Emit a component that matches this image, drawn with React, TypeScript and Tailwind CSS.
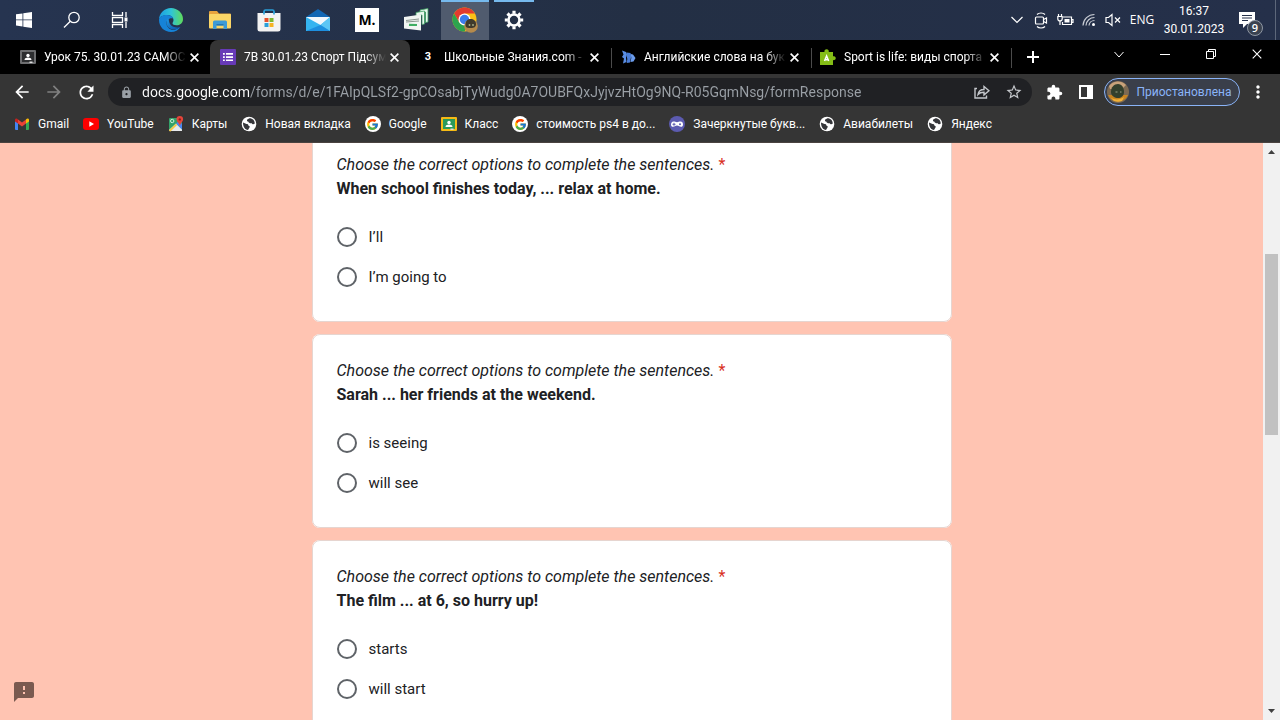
import type { ReactNode } from 'react'
import { FcGoogle } from 'react-icons/fc'
import {
  MdArrowBack,
  MdArrowForward,
  MdExtension,
  MdFeedback,
  MdLock,
  MdMoreVert,
  MdRefresh,
  MdStarBorder,
} from 'react-icons/md'

const QUESTION_TITLE = 'Choose the correct options to complete the sentences.'

const questions = [
  { id: 'q1', text: 'When school finishes today, ... relax at home.', options: ['I’ll', 'I’m going to'] },
  { id: 'q2', text: 'Sarah ... her friends at the weekend.', options: ['is seeing', 'will see'] },
  { id: 'q3', text: 'The film ... at 6, so hurry up!', options: ['starts', 'will start'] },
]

/* ---------- taskbar icons ---------- */

const StartIcon = () => (
  <svg width="16" height="16" viewBox="0 0 16 16" fill="#fff">
    <path d="M0 2.3 6.5 1.400V7.500H0zM7.300 1.300 16 0V7.500H7.300zM0 8.300H6.500V14.500L0 13.600zM7.300 8.300H16V16L7.300 14.700z" />
  </svg>
)

const SearchIcon = () => (
  <svg width="18" height="18" viewBox="0 0 18 18" fill="none" stroke="#fff" strokeWidth="1.3">
    <circle cx="11" cy="6.500" r="5.200" />
    <path d="M7.300 10.200 1 16.500" />
  </svg>
)

const TaskViewIcon = () => (
  <svg width="18" height="18" viewBox="0 0 18 18" fill="none" stroke="#fff" strokeWidth="1.300">
    <path d="M1.500 1v3.500h10V1M1.500 17v-3.500h10V17M1.500 6.700h10v4.600h-10zM15 1v5M15 11v6" />
    <path d="M15 6.500v4" strokeWidth="3" />
  </svg>
)

const EdgeIcon = () => (
  <svg width="26" height="26" viewBox="0 0 26 26">
    <defs>
      <linearGradient id="edgeTop" x1="0" y1="0.500" x2="1" y2="0.500">
        <stop offset="0" stopColor="#1b9de2" />
        <stop offset="0.500" stopColor="#2fc4d8" />
        <stop offset="1" stopColor="#5fdc5a" />
      </linearGradient>
      <linearGradient id="edgeLow" x1="0" y1="0" x2="1" y2="1">
        <stop offset="0" stopColor="#1f9ae6" />
        <stop offset="1" stopColor="#0c4fa3" />
      </linearGradient>
    </defs>
    <path d="M1 13C1 6 6.500 1 13 1s12 5 12 11c0 4-3 6.300-6.500 6.300-2.500 0-4-1-4-2 0-.8 1-1.300 1-3.300C15.500 10 12.500 8 9 8c-4.500 0-8 2.500-8 5z" fill="url(#edgeTop)" />
    <path d="M1 13c0-3 3.500-5 8-5 3.500 0 5.500 1.500 6.300 3.400C11 10.500 8.500 13 8.500 16c0 4.500 4 8 9 6.500l5-2.500C20.500 23 17 25 13 25 6.500 25 1 20 1 13z" fill="#1683d8" />
    <path d="M10.200 11.200C9 12.500 8.500 14 8.500 16c0 4.300 4.500 7 9 6.300 2-.3 3.800-1.300 5-2.500-2 1.200-8 1.200-10.500-2.800-1.500-2.500-.8-4.800-1.800-5.800z" fill="url(#edgeLow)" />
  </svg>
)

const ExplorerIcon = () => (
  <svg width="22" height="20" viewBox="0 0 22 20">
    <path d="M0 2a1 1 0 0 1 1-1h7l2 2.500h11a1 1 0 0 1 1 1V10H0z" fill="#e8a33d" />
    <rect y="4" width="22" height="14.500" rx="1" fill="#fbd667" />
    <path d="M4 19v-7a1.500 1.500 0 0 1 1.500-1.500h11A1.500 1.500 0 0 1 18 12v7h-3.500v-3.500h-7V19z" fill="#3d9bd6" />
    <path d="M7.500 14h7v1.500h-7z" fill="#2477b3" />
  </svg>
)

const StoreIcon = () => (
  <svg width="24" height="24" viewBox="0 0 24 24">
    <path d="M7 7V3.500A1.500 1.500 0 0 1 8.500 2h7A1.500 1.500 0 0 1 17 3.500V7" fill="none" stroke="#2a9fd8" strokeWidth="1.600" />
    <path d="M.5 5h23v16a2.500 2.500 0 0 1-2.500 2.500H3A2.500 2.500 0 0 1 .5 21z" fill="#f3f3f3" />
    <path d="M7 3.500V6.500M17 3.500V6.500" stroke="#2a9fd8" strokeWidth="1.600" />
    <path d="M7.500 10h4v4h-4z" fill="#e5502a" />
    <path d="M12.500 10h4v4h-4z" fill="#7cb82f" />
    <path d="M7.500 15h4v4h-4z" fill="#2a9fd8" />
    <path d="M12.500 15h4v4h-4z" fill="#f5b322" />
  </svg>
)

const MailIcon = () => (
  <svg width="24" height="23" viewBox="0 0 24 23">
    <path d="M0 8 12 0l12 8v6H0z" fill="#1267b4" />
    <path d="M0 8h24v14H0z" fill="#35b4f0" />
    <path d="M0 8h24L14.500 16z" fill="#f2f8fd" />
    <path d="M24 8v14l-9.500-6z" fill="#5cc6f5" />
    <path d="M0 22 14.500 16 24 22z" fill="#1d8fdf" />
  </svg>
)

const SpaceDeskIcon = () => (
  <svg width="26" height="24" viewBox="0 0 26 24">
    <path d="M17 2 25 .5V14l-2.500.5V4L17 5z" fill="#e9f7ee" stroke="#3f9f62" strokeWidth=".8" />
    <path d="M13 4.500 21.500 3v13l-2.500.5V7l-6 1z" fill="#e9f7ee" stroke="#3f9f62" strokeWidth=".8" />
    <path d="M1 9 18 6.500v16L1 20.500z" fill="#f1f5f2" />
    <path d="M3 12.500 16 11M3 14l13-1" stroke="#8a968e" strokeWidth="1" />
    <path d="M6 16.800l8 .200" stroke="#3fae62" strokeWidth="2.200" />
  </svg>
)

const ChromeIcon = () => (
  <svg width="26" height="26" viewBox="0 0 26 26">
    <circle cx="12.500" cy="12.500" r="12" fill="#fbc116" />
    <path d="M2.100 6.500A12 12 0 0 1 22.900 6.500H12.500L7.300 15.500z" fill="#e33b2e" />
    <path d="M2.100 6.500A12 12 0 0 0 12.500 24.500L17.700 15.500H7.300z" fill="#2da44e" />
    <circle cx="12.500" cy="12.500" r="6" fill="#fff" />
    <circle cx="12.500" cy="12.500" r="4.700" fill="#3b7ded" />
    <circle cx="19" cy="19" r="6.800" fill="#b58a4c" />
    <path d="M13.500 18c0-4 2-6 5-6s5.500 2 5.500 5-2 4-5 4-5.500 0-5.500-3z" fill="#3f3a2c" />
    <circle cx="17.500" cy="18" r="0.900" fill="#a9b08a" />
    <circle cx="21" cy="18" r="0.900" fill="#a9b08a" />
  </svg>
)

const GearIcon = () => (
  <svg width="20" height="20" viewBox="0 0 20 20" fill="none" stroke="#fff">
    <circle cx="10" cy="10" r="5.500" strokeWidth="2.600" />
    {[0, 45, 90, 135].map((a) => (
      <path key={a} d="M10 .800v3M10 16.200v3" strokeWidth="3.200" transform={`rotate(${a} 10 10)`} />
    ))}
  </svg>
)

/* ---------- tray icons ---------- */

const ChevronIcon = () => (
  <svg width="14" height="8" viewBox="0 0 14 8" fill="none" stroke="#fff" strokeWidth="1.200">
    <path d="M1.500 1 7 6.500 12.500 1" />
  </svg>
)

const MeetNowIcon = () => (
  <svg width="14" height="17" viewBox="0 0 14 17" fill="none" stroke="#fff" strokeWidth="1.200">
    <path d="M3 2.500C5 .5 9 .5 11 2.500M3 14.500c2 2 6 2 8 0" />
    <rect x="1.500" y="5" width="8" height="7" rx="1" />
    <path d="M9.500 7.500 12.500 6v5L9.500 9.500" />
  </svg>
)

const BatteryIcon = () => (
  <svg width="17" height="14" viewBox="0 0 17 14" fill="none" stroke="#fff" strokeWidth="1.200">
    <path d="M6 4h8.500v7.500h-9V9M14.500 6.500H16v3h-1.500" />
    <path d="M7.500 6h5v3.500h-5z" fill="#fff" stroke="none" />
    <path d="M1.500 1v2M4.500 1v2M.8 3.500h4.400v2.200a2 2 0 0 1-4.400 0zM3 8v4" />
  </svg>
)

const WifiIcon = () => (
  <svg width="14" height="14" viewBox="0 0 14 14" fill="none" stroke="#c8ccd4" strokeWidth="1.200">
    <path d="M1 12.500A11.500 11.500 0 0 1 12.500 1.500M4 12.500a8.500 8.500 0 0 1 8.500-8M7 12.500A5.500 5.500 0 0 1 12.500 7.500" />
    <circle cx="11.500" cy="11.500" r="1.500" fill="#fff" stroke="none" />
  </svg>
)

const MutedIcon = () => (
  <svg width="16" height="14" viewBox="0 0 16 14" fill="none" stroke="#fff" strokeWidth="1.200">
    <path d="M1 4.500h2.500L7 1.500v11L3.500 9.500H1z" />
    <path d="M10 4.500l5 5M15 4.500l-5 5" />
  </svg>
)

const NotificationIcon = () => (
  <svg width="16" height="17" viewBox="0 0 16 17">
    <path d="M0 0h16v12H8l-4 4v-4H0z" fill="#fff" />
    <path d="M3 3.500h10M3 6h10M3 8.500h6" stroke="#26314a" />
  </svg>
)

/* ---------- favicons ---------- */

const ClassroomIcon = ({ muted = false }: { muted?: boolean }) => (
  <svg width="16" height="16" viewBox="0 0 16 16">
    <rect y="1" width="16" height="14" rx="1" fill={muted ? '#6d6e70' : '#f5ba15'} />
    <rect x="2" y="3" width="12" height="10" fill={muted ? '#2d2e30' : '#2a9a5b'} />
    <circle cx="8" cy="6.500" r="1.700" fill="#fff" />
    <path d="M4.500 11c0-1.700 2-2.400 3.500-2.400s3.500.7 3.500 2.400z" fill="#fff" />
    <path d="M9.500 12.500h3V14h-3z" fill="#ddd" />
  </svg>
)

const FormsIcon = () => (
  <svg width="16" height="16" viewBox="0 0 16 16">
    <rect width="16" height="16" rx="1" fill="#673ab7" />
    <path d="M6 4h7v1.700H6zM6 7.200h7v1.700H6zM6 10.400h7v1.700H6zM3 4h1.800v1.700H3zM3 7.200h1.800v1.700H3zM3 10.400h1.800v1.700H3z" fill="#fff" />
  </svg>
)

const WordsIcon = () => (
  <svg width="16" height="16" viewBox="0 0 16 16">
    <path d="M2 1.500 6 3l1 2.500-1 3 .5 4.500L3 14.500 4 9.500 2 8l1.500-2.500z" fill="#5b8fe6" />
    <path d="M6.500 3.500 10.500 4l.8 3-1.300 6.500-3.300.5.600-4L6.500 7z" fill="#4a7ed8" />
    <path d="M10.800 5l2.200.500L15.500 9l-2 3.500-3 .5.800-4z" fill="#6b9cec" />
  </svg>
)

const PuzzleFavicon = () => (
  <svg width="16" height="16" viewBox="0 0 16 16">
    <path d="M0 3h4.500a2.200 2.200 0 1 1 4.200 0H13v4.300a2 2 0 1 1 0 3.700v5H0z" fill="#84bd16" />
    <path d="M4.500 12 6.600 7l2.100 5M5.300 10.800h2.600" fill="none" stroke="#fff" strokeWidth="1.500" />
  </svg>
)

const ZnanijaIcon = () => (
  <span className="w-4 text-center text-[11px] font-bold text-white">3</span>
)

const GmailIcon = () => (
  <svg width="16" height="16" viewBox="0 0 16 16">
    <path d="M1 4v9a1 1 0 0 0 1 1h2V6z" fill="#4285f4" />
    <path d="M15 4v9a1 1 0 0 1-1 1h-2V6z" fill="#34a853" />
    <path d="M4 3.500 8 6.500l4-3v4L8 10.500 4 7.500z" fill="#ea4335" />
    <path d="M1 4c0-1.500 1.700-2 3-.5v4L1 5.500z" fill="#c5221f" />
    <path d="M15 4c0-1.500-1.700-2-3-.5v4l3-2z" fill="#fbbc04" />
  </svg>
)

const YouTubeIcon = () => (
  <svg width="16" height="16" viewBox="0 0 16 16">
    <rect y="2" width="16" height="12" rx="3" fill="#f00" />
    <path d="M6.300 5.300v5.400L11 8z" fill="#fff" />
  </svg>
)

const MapsIcon = () => (
  <svg width="16" height="16" viewBox="0 0 16 16">
    <rect x="1" y="2" width="13" height="13" rx="1" fill="#34a26a" />
    <path d="M1 14 8 7.500l6 6v1a.5.5 0 0 1-.5.5H2z" fill="#e8eaed" />
    <path d="M8 7.500 11 5l3 3v5.500z" fill="#4a86f0" />
    <path d="M1.500 15 8.500 8.300" stroke="#f6c945" strokeWidth="1.800" />
    <circle cx="4.200" cy="5" r="1.700" fill="none" stroke="#cdeedb" />
    <path d="M11.800 0a3.300 3.300 0 0 1 3.300 3.300c0 2.400-2.700 3.700-3.300 6.500-.6-2.800-3.300-4.100-3.300-6.500A3.300 3.300 0 0 1 11.800 0z" fill="#e5453a" />
    <circle cx="11.800" cy="3.400" r="1.200" fill="#8c1f1a" />
  </svg>
)

const GlobeIcon = () => (
  <svg width="16" height="16" viewBox="0 0 16 16">
    <circle cx="8" cy="8" r="7.300" fill="#fff" />
    <path d="M2 6.500 5.500 8c1.300 0 2 .7 2 1.700 1.200 0 1.500.8 1 1.800L7 14c-3-.3-5-3-5-7.500z" fill="#35363a" />
    <path d="M6 3.800C7 3 8 2.300 9.500 2.300c2.500.5 4.300 2.700 4.300 5.200-1.300 1.300-2.600.8-3-.3-1.500.3-3.300-.2-3.300-1.400C6.500 5.800 5.700 4.800 6 3.800z" fill="#35363a" />
  </svg>
)

const GoogleIcon = () => (
  <span className="flex size-4 items-center justify-center rounded-full bg-white">
    <FcGoogle size={13} />
  </span>
)

const GamepadIcon = () => (
  <svg width="16" height="16" viewBox="0 0 16 16">
    <circle cx="8" cy="8" r="8" fill="#5c5bb0" />
    <path d="M4.500 5.500c1.500 0 2 .7 3.500.7s2-.7 3.500-.7c1.700 0 2.500 1.300 2.500 3s-.8 2.300-2 2.300c-1.500 0-2-1.300-4-1.300s-2.500 1.300-4 1.300c-1.200 0-2-.8-2-2.300s.8-3 2.500-3z" fill="#fff" />
    <path d="M3.500 8.300h3M5 6.800v3" stroke="#5c5bb0" />
    <circle cx="11" cy="8.300" r="1" fill="#5c5bb0" />
  </svg>
)

const CloseIcon = ({ size = 9, stroke = 1.8 }: { size?: number; stroke?: number }) => (
  <svg width={size} height={size} viewBox="0 0 10 10" stroke="#fff" strokeWidth={stroke}>
    <path d="M.7.7l8.600 8.600M9.300.7.700 9.300" />
  </svg>
)

const AvatarIcon = () => (
  <svg width="22" height="22" viewBox="0 0 22 22">
    <circle cx="11" cy="11" r="11" fill="#7d6a52" />
    <path d="M2 5a11 11 0 0 1 17-1l-4 4H3z" fill="#c9a27a" />
    <path d="M1 14h20a11 11 0 0 1-20 0z" fill="#c98420" />
    <path d="M4 11c0-5 3-8 7-8s6 4 6 8-3 6-6 6-7-2-7-6z" fill="#34402c" />
    <path d="M8.500 11h2M13 11h1.500" stroke="#9aa58a" />
    <path d="M4 17c4 2 9 2 13-1l-2 4a11 11 0 0 1-8 0z" fill="#efb13a" />
  </svg>
)

const apps = [
  { name: 'Microsoft Edge', icon: <EdgeIcon /> },
  { name: 'Проводник', icon: <ExplorerIcon /> },
  { name: 'Microsoft Store', icon: <StoreIcon /> },
  { name: 'Почта', icon: <MailIcon /> },
  {
    name: 'M',
    icon: (
      <span className="flex h-6 w-6 items-center justify-center bg-white text-sm font-bold text-black">
        M.
      </span>
    ),
  },
  { name: 'spacedesk', icon: <SpaceDeskIcon /> },
  { name: 'Google Chrome', icon: <ChromeIcon />, active: true },
  { name: 'Параметры', icon: <GearIcon />, open: true },
]

const tabs = [
  { title: 'Урок 75. 30.01.23 САМОС', icon: <ClassroomIcon muted /> },
  { title: '7В 30.01.23 Спорт Підсум', icon: <FormsIcon />, active: true },
  { title: 'Школьные Знания.com -', icon: <ZnanijaIcon />, divider: true },
  { title: 'Английские слова на бук', icon: <WordsIcon />, divider: true },
  { title: 'Sport is life: виды спорта', icon: <PuzzleFavicon />, divider: true },
]

const bookmarks = [
  { title: 'Gmail', icon: <GmailIcon /> },
  { title: 'YouTube', icon: <YouTubeIcon /> },
  { title: 'Карты', icon: <MapsIcon /> },
  { title: 'Новая вкладка', icon: <GlobeIcon /> },
  { title: 'Google', icon: <GoogleIcon /> },
  { title: 'Класс', icon: <ClassroomIcon /> },
  { title: 'стоимость ps4 в до...', icon: <GoogleIcon /> },
  { title: 'Зачеркнутые букв...', icon: <GamepadIcon /> },
  { title: 'Авиабилеты', icon: <GlobeIcon /> },
  { title: 'Яндекс', icon: <GlobeIcon /> },
]

function IconButton({ label, className, children }: { label: string; className: string; children: ReactNode }) {
  return (
    <button type="button" aria-label={label} className={`flex shrink-0 items-center justify-center ${className}`}>
      {children}
    </button>
  )
}

function Taskbar() {
  return (
    <header className="flex h-10 shrink-0 bg-linear-to-r from-[#263450] via-[#232f44] to-[#25304a] text-white">
      <IconButton label="Пуск" className="w-12">
        <StartIcon />
      </IconButton>
      <IconButton label="Поиск" className="w-12">
        <SearchIcon />
      </IconButton>
      <IconButton label="Представление задач" className="w-12">
        <TaskViewIcon />
      </IconButton>

      <div className="ml-[3px] flex gap-px">
        {apps.map((app) => (
          <button
            key={app.name}
            type="button"
            aria-label={app.name}
            className={`relative flex w-12 items-center justify-center ${app.active ? 'bg-[#505b6e]' : ''}`}
          >
            {app.icon}
            {app.active && <span className="absolute inset-x-0 top-0 h-0.5 bg-[#76b9ed]" />}
            {app.open && <span className="absolute inset-x-1 top-0 h-0.5 bg-[#76b9ed]" />}
          </button>
        ))}
      </div>

      <div className="ml-auto flex">
        <IconButton label="Скрытые значки" className="w-6">
          <ChevronIcon />
        </IconButton>
        <IconButton label="Провести собрание" className="w-6">
          <MeetNowIcon />
        </IconButton>
        <IconButton label="Батарея" className="w-6">
          <BatteryIcon />
        </IconButton>
        <IconButton label="Сеть" className="w-6">
          <WifiIcon />
        </IconButton>
        <IconButton label="Звук" className="w-6">
          <MutedIcon />
        </IconButton>
        <button type="button" className="w-[34px] text-center text-xs">
          ENG
        </button>
        <button type="button" className="w-[70px] text-center font-[Roboto,sans-serif] text-xs leading-[18px]">
          <span className="block">16:37</span>
          <span className="block">30.01.2023</span>
        </button>
        <button type="button" aria-label="Уведомления" className="relative w-[46px] pl-2.5">
          <NotificationIcon />
          <span className="absolute right-3 bottom-1 flex size-4 items-center justify-center rounded-full border border-[#8f97a3] bg-[#3a4250] text-[11px] font-semibold">
            9
          </span>
        </button>
        <span className="w-[5px] border-l border-[#5d677a]" />
      </div>
    </header>
  )
}

function TabStrip() {
  return (
    <div className="flex h-[34px] shrink-0 bg-black pl-2.5 font-[Roboto,sans-serif] text-xs text-white">
      {tabs.map((tab) => (
        <div
          key={tab.title}
          className={`relative flex w-[200px] items-center pr-2 pl-2.5 ${tab.active ? 'rounded-t-lg bg-[#353535]' : ''}`}
        >
          {tab.icon}
          <button
            type="button"
            className="ml-2 min-w-0 flex-1 overflow-hidden mask-r-from-85% text-left whitespace-nowrap"
          >
            {tab.title}
          </button>
          <IconButton label="Закрыть вкладку" className="w-4">
            <CloseIcon />
          </IconButton>
          {tab.divider && <span className="absolute top-2 -right-0.5 h-5 w-px bg-[#4b4b4b]" />}
        </div>
      ))}
      <IconButton label="Новая вкладка" className="ml-2 w-[30px]">
        <svg width="12" height="12" viewBox="0 0 12 12" stroke="#fff" strokeWidth="2">
          <path d="M6 0v12M0 6h12" />
        </svg>
      </IconButton>

      <div className="ml-auto flex h-7">
        <IconButton label="Поиск вкладок" className="w-[46px]">
          <svg width="10" height="7" viewBox="0 0 10 7" fill="none" stroke="#fff">
            <path d="M.5 1 5 6l4.500-5" />
          </svg>
        </IconButton>
        <IconButton label="Свернуть" className="w-[46px]">
          <svg width="10" height="10" viewBox="0 0 10 10" stroke="#fff">
            <path d="M0 5.500h10" />
          </svg>
        </IconButton>
        <IconButton label="Восстановить" className="w-[46px]">
          <svg width="10" height="10" viewBox="0 0 10 10" fill="none" stroke="#fff">
            <path d="M.5 2.500h7v7h-7zM2.500 2.500v-2h7v7h-2" />
          </svg>
        </IconButton>
        <IconButton label="Закрыть" className="w-[46px]">
          <CloseIcon size={10} stroke={1.1} />
        </IconButton>
      </div>
    </div>
  )
}

function Toolbar() {
  return (
    <div className="flex h-9 shrink-0 items-center bg-[#353535] px-1.5 font-[Roboto,sans-serif] text-white">
      <IconButton label="Назад" className="size-8">
        <MdArrowBack size={20} />
      </IconButton>
      <IconButton label="Вперёд" className="size-8 text-[#808080]">
        <MdArrowForward size={20} />
      </IconButton>
      <IconButton label="Обновить" className="size-8">
        <MdRefresh size={21} />
      </IconButton>

      <div className="ml-1.5 flex h-7 min-w-0 flex-1 items-center rounded-full bg-[#202124] pl-3">
        <MdLock size={13} className="shrink-0 text-[#9aa0a6]" />
        {/* host part of the address is white, the path is dimmed */}
        <input
          type="text"
          aria-label="Адресная строка"
          defaultValue="docs.google.com/forms/d/e/1FAIpQLSf2-gpCOsabjTyWudg0A7OUBFQxJyjvzHtOg9NQ-R05GqmNsg/formResponse"
          className="ml-[9px] min-w-0 flex-1 bg-[linear-gradient(90deg,#fff_107px,#9aa0a6_107px)] bg-clip-text text-sm text-transparent outline-none"
        />
        <IconButton label="Поделиться" className="w-8 text-[#c4c7cb]">
          <svg width="16" height="14" viewBox="0 0 16 14" fill="none" stroke="currentColor" strokeWidth="1.400">
            <path d="M3 3.500H1V13h11.500v-2.500" />
            <path d="M4 9.500c.5-3.500 3-5 6-5V1.500l5 4.200-5 4.200V7.300c-2.800 0-4.500.5-6 2.200z" />
          </svg>
        </IconButton>
        <IconButton label="Добавить в закладки" className="mr-0.5 w-8 text-[#c4c7cb]">
          <MdStarBorder size={18} />
        </IconButton>
      </div>

      <IconButton label="Расширения" className="ml-1.5 size-8">
        <MdExtension size={17} />
      </IconButton>
      <IconButton label="Боковая панель" className="size-8">
        <svg width="14" height="14" viewBox="0 0 14 14">
          <path d="M0 0h14v14H0zM2 2v10h6V2z" fill="#fff" fillRule="evenodd" />
        </svg>
      </IconButton>
      <button
        type="button"
        className="ml-0.5 flex h-7 w-[136px] shrink-0 items-center rounded-full border border-[#8ab4f8] bg-[#3a3f4a] pl-0.5 text-xs text-[#8ab4f8]"
      >
        <AvatarIcon />
        <span className="flex-1 text-center">Приостановлена</span>
      </button>
      <IconButton label="Меню" className="ml-0.5 size-8">
        <MdMoreVert size={20} />
      </IconButton>
    </div>
  )
}

function BookmarksBar() {
  return (
    <nav className="flex h-[33px] shrink-0 gap-3.5 overflow-hidden border-b border-[#4a4340] bg-[#353535] px-3.5 pb-1 font-[Roboto,sans-serif] text-xs text-white">
      {bookmarks.map((item) => (
        <a key={item.title} href="#" className="flex shrink-0 items-center gap-2 whitespace-nowrap">
          {item.icon}
          {item.title}
        </a>
      ))}
    </nav>
  )
}

function QuestionCard({ question }: { question: (typeof questions)[number] }) {
  return (
    <fieldset className="rounded-lg border border-[#e6d5d0] bg-white p-6">
      <legend className="float-left w-full">
        <i>{QUESTION_TITLE}</i> <span className="text-[#d93025]">*</span>
        <br />
        <b>{question.text}</b>
      </legend>
      <div className="clear-both pt-4">
        {question.options.map((option) => (
          <label key={option} className="flex h-10 items-center gap-3 text-[15px]">
            <input
              type="radio"
              name={question.id}
              className="size-5 shrink-0 appearance-none rounded-full border-2 border-[#5f6368]"
            />
            {option}
          </label>
        ))}
      </div>
    </fieldset>
  )
}

function Scrollbar() {
  return (
    <div className="flex w-[17px] shrink-0 flex-col items-center bg-[#f1f1f1]">
      <svg width="17" height="17" viewBox="0 0 17 17" fill="#404040">
        <path d="M5 11h7L8.500 7z" />
      </svg>
      <div className="flex w-full flex-1 flex-col items-center">
        <div className="h-[17.400%]" />
        <div className="h-1/3 w-[13px] bg-[#c1c1c1]" />
      </div>
      <svg width="17" height="17" viewBox="0 0 17 17" fill="#404040">
        <path d="M5 6h7l-3.500 4z" />
      </svg>
    </div>
  )
}

export default function App() {
  return (
    <div className="flex h-screen flex-col overflow-hidden font-['Open_Sans',sans-serif]">
      <Taskbar />
      <TabStrip />
      <Toolbar />
      <BookmarksBar />
      <div className="flex min-h-0 flex-1">
        <main className="relative min-w-0 flex-1 overflow-hidden bg-[#ffc4b2] font-[Roboto,sans-serif] text-base text-[#202124]">
          {/* the form is scrolled, its first card starts above the edge */}
          <form className="mx-auto -mt-[15px] flex max-w-[640px] flex-col gap-3">
            {questions.map((question) => (
              <QuestionCard key={question.id} question={question} />
            ))}
          </form>
          <button type="button" aria-label="Сообщить о проблеме" className="absolute bottom-4 left-3 text-[#7a5a50]">
            <MdFeedback size={24} />
          </button>
        </main>
        <Scrollbar />
      </div>
    </div>
  )
}
